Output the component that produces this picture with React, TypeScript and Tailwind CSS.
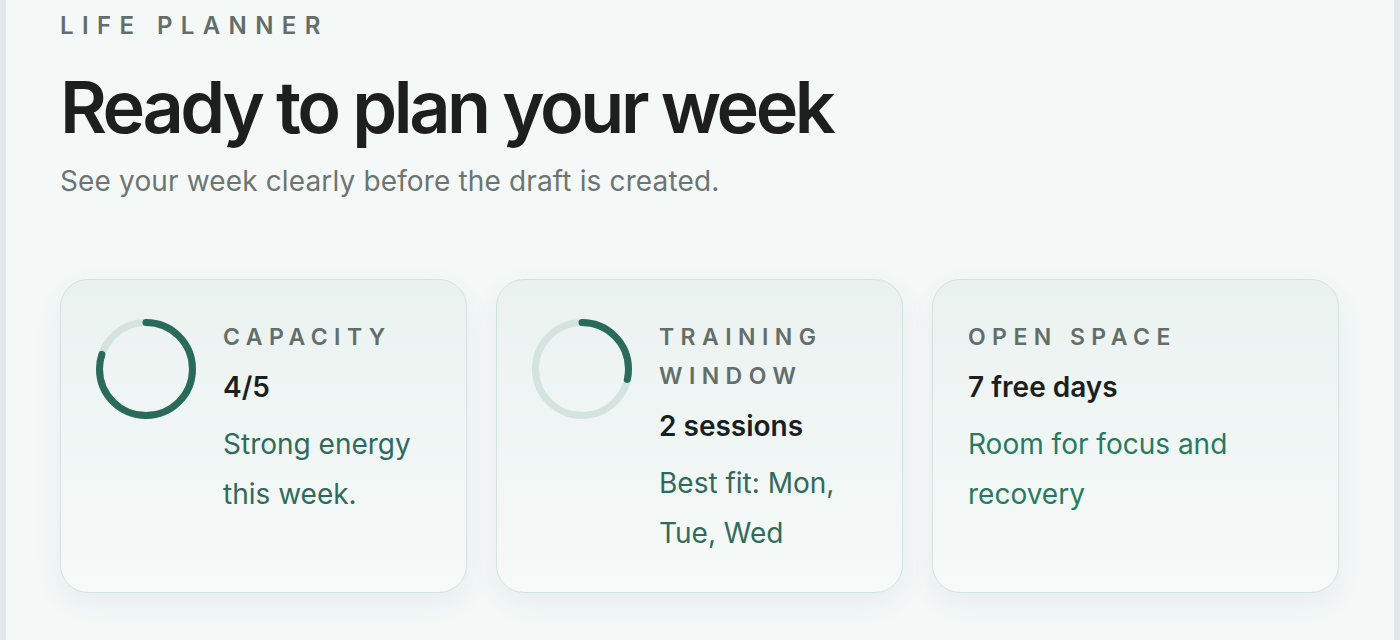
// Weekly planner overview: header plus three summary cards

interface Stat {
  label: string
  value: string
  note: string
  progress?: number
  noteColor: string
}

const stats: Stat[] = [
  { label: 'CAPACITY', value: '4/5', note: 'Strong energy this week.', progress: 0.8, noteColor: 'text-[#2f6b5c]' },
  { label: 'TRAINING WINDOW', value: '2 sessions', note: 'Best fit: Mon, Tue, Wed', progress: 2 / 7, noteColor: 'text-[#2f6b5c]' },
  { label: 'OPEN SPACE', value: '7 free days', note: 'Room for focus and recovery', noteColor: 'text-[#287a5f]' },
]

function Ring({ progress }: { progress: number }) {
  const r = 46.5
  const c = 2 * Math.PI * r
  return (
    <svg width="100" height="100" viewBox="0 0 100 100" className="shrink-0 mt-[1px] -rotate-90">
      <circle cx="50" cy="50" r={r} fill="none" stroke="#d5e3df" strokeWidth="7" />
      <circle
        cx="50"
        cy="50"
        r={r}
        fill="none"
        stroke="#2a6a5b"
        strokeWidth="7"
        strokeLinecap="round"
        strokeDasharray={`${c * progress} ${c}`}
      />
    </svg>
  )
}

function StatCard({ stat }: { stat: Stat }) {
  return (
    <div className="rounded-[28px] border-[1.5px] border-[#d3e2dd] bg-gradient-to-b from-[#eaf2f0] to-[#f6faf9] shadow-[0_10px_28px_rgba(40,80,70,0.07)] pl-[35px] pr-9 pt-[38px] pb-[34px] flex gap-[27px]">
      {stat.progress !== undefined && <Ring progress={stat.progress} />}
      <div className="flex-1 min-w-0">
        <div className="text-[23px] leading-[39px] font-semibold tracking-[0.28em] text-[#636d6a]">
          {stat.label}
        </div>
        <div className="mt-3 text-[28px] leading-[36px] font-semibold text-[#1b1f1e]">
          {stat.value}
        </div>
        <div className={`mt-[14px] text-[28px] leading-[50px] ${stat.noteColor}`}>
          {stat.note}
        </div>
      </div>
    </div>
  )
}

export default function App() {
  return (
    <div className="w-full h-[640px] bg-[#e3e9e8] px-[6px] overflow-hidden" style={{ fontFamily: 'Inter, "Noto Sans", sans-serif' }}>
      <div className="h-full bg-[#f4f9f8] pl-[54px] pr-[55px] pt-[10px]">
        <div className="text-[24px] leading-[32px] font-semibold tracking-[0.35em] text-[#636d6a]">
          LIFE PLANNER
        </div>
        <h1 className="mt-[28px] text-[72px] leading-[74px] font-semibold tracking-[-0.048em] text-[#1c1f1e]">
          Ready to plan your week
        </h1>
        <p className="mt-[19px] text-[28px] leading-[36px] tracking-[0.005em] text-[#6c7572]">
          See your week clearly before the draft is created.
        </p>
        <div className="mt-[80px] grid grid-cols-3 gap-[29px]">
          {stats.map((s) => (
            <StatCard key={s.label} stat={s} />
          ))}
        </div>
      </div>
    </div>
  )
}
